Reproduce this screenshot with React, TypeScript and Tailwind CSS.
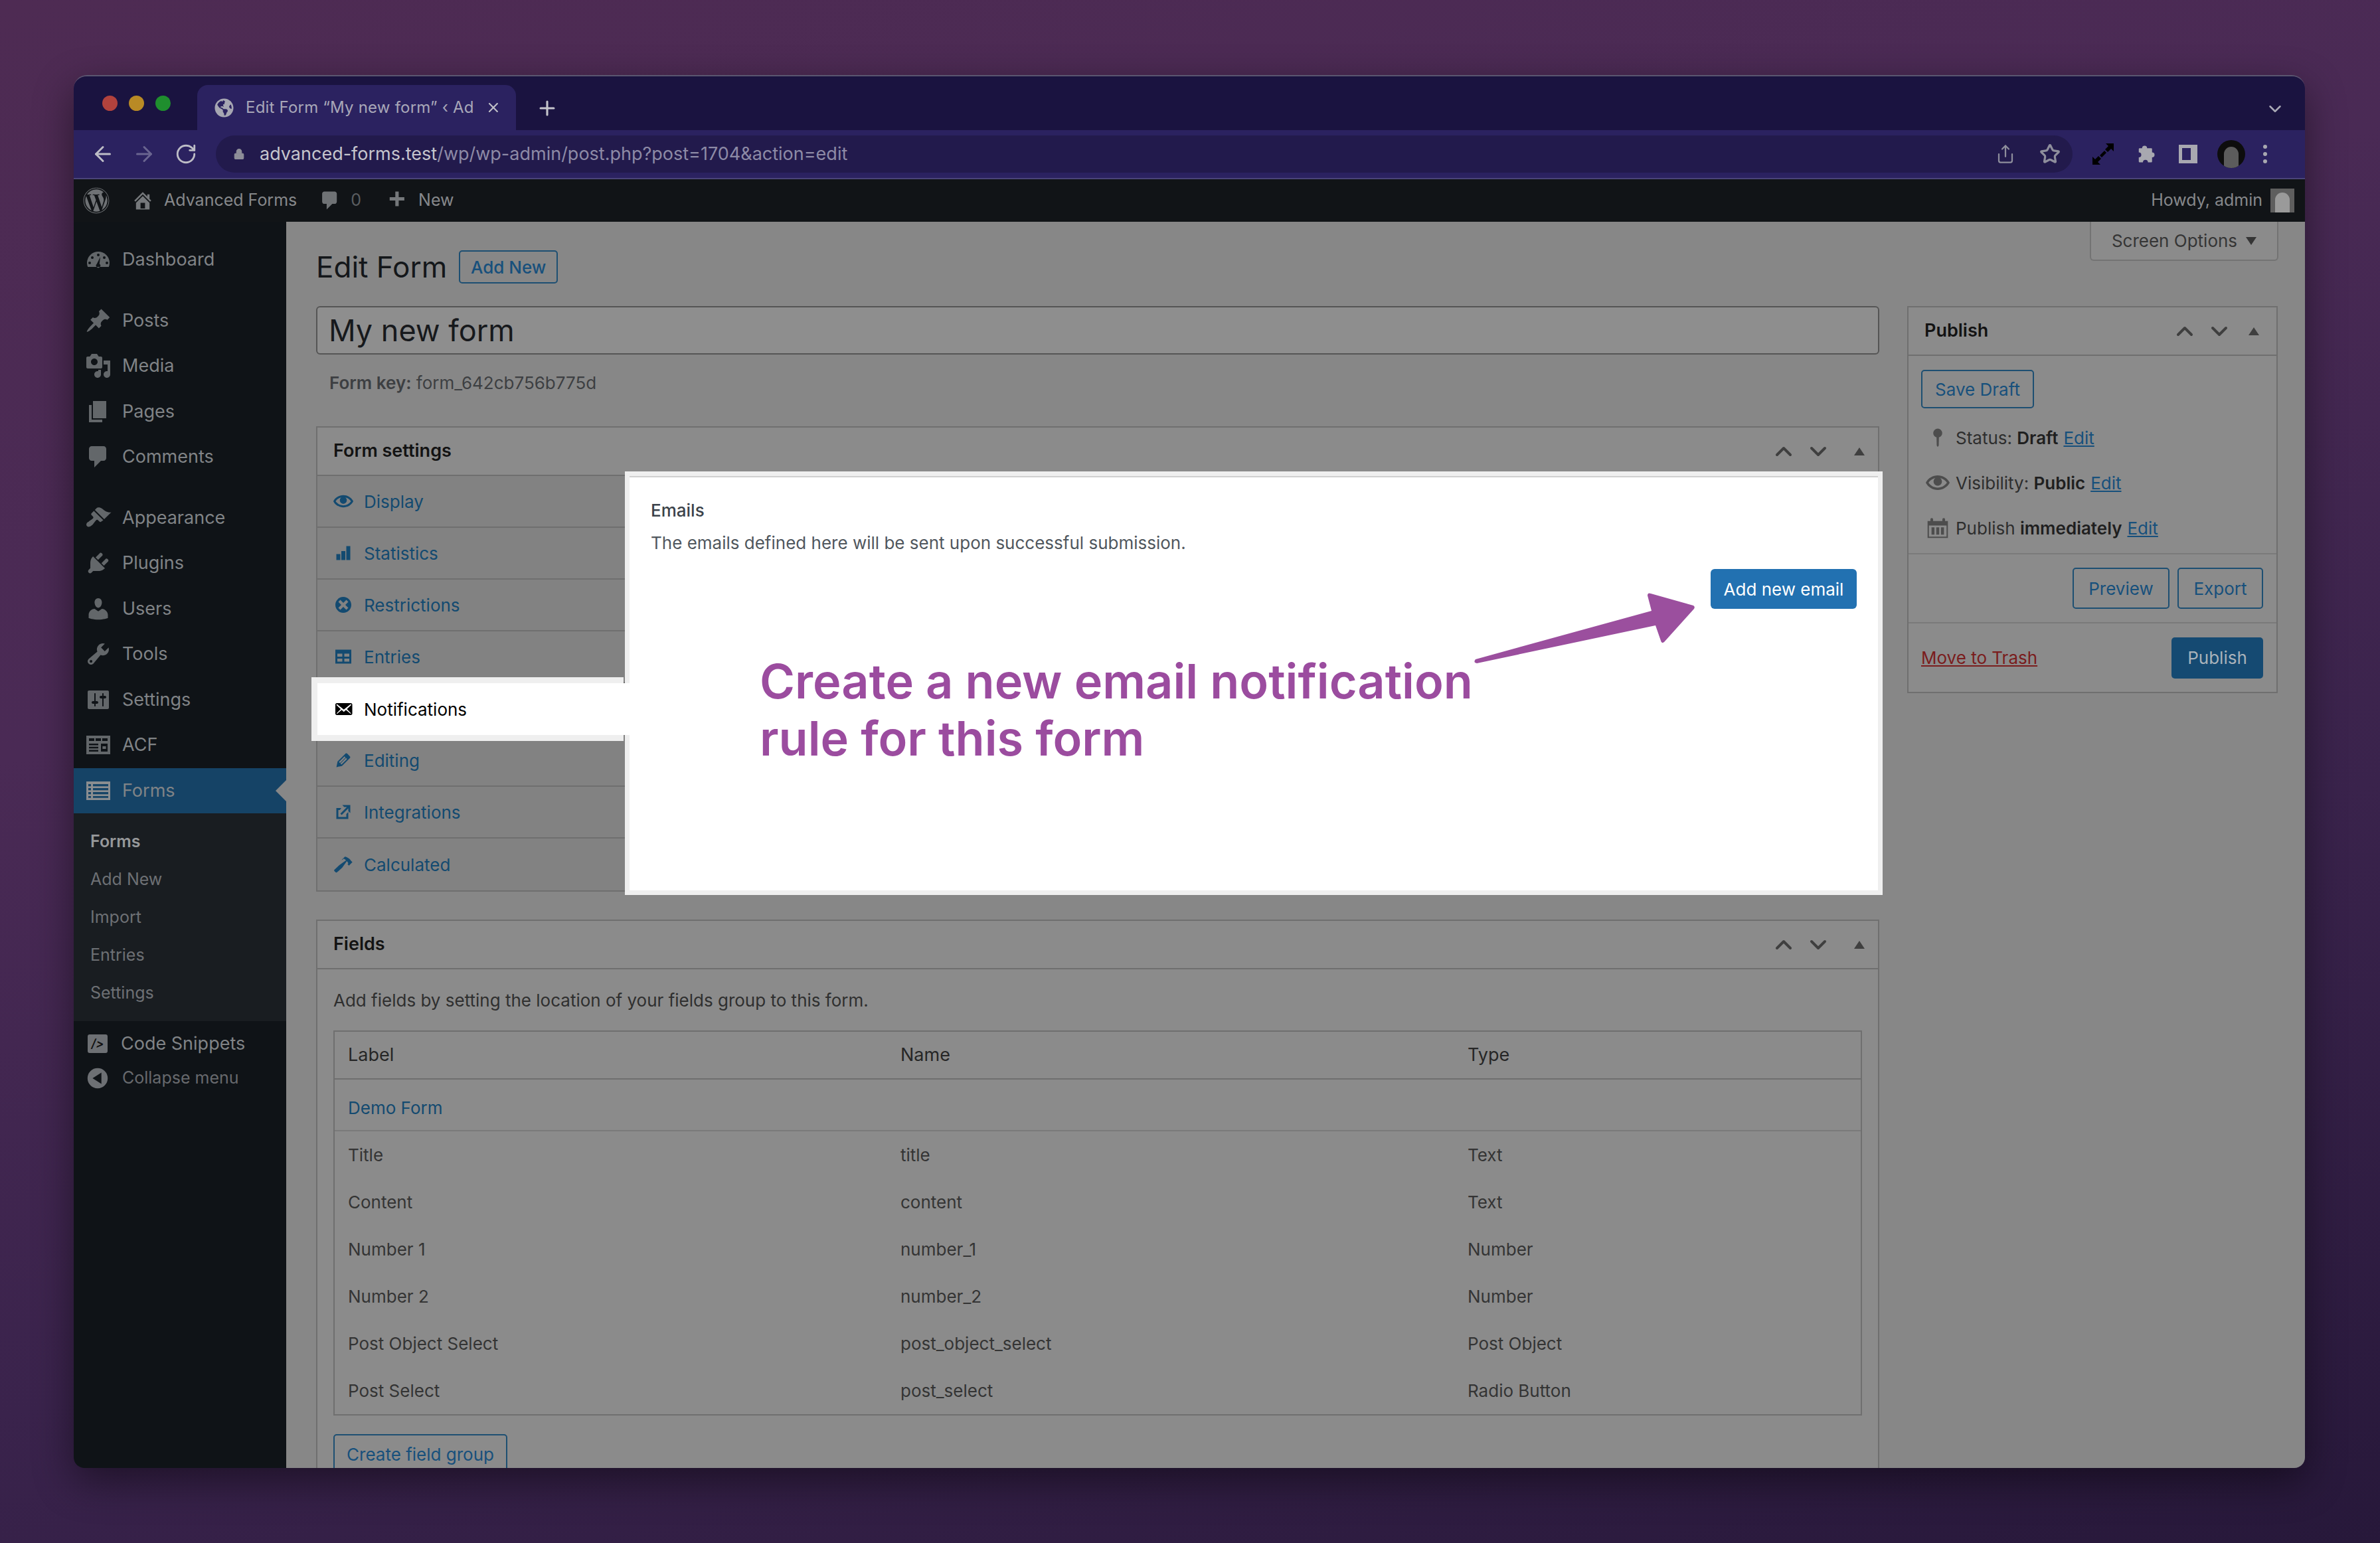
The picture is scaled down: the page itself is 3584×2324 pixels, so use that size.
import { ChevronDown, ChevronUp, ArrowLeft, ArrowRight, RotateCw, Lock, Plus, X, Star, Share } from "lucide-react";
import { FaWordpress, FaGlobeAmericas } from "react-icons/fa";
import type { ReactNode } from "react";

const P = {
    dashboard: "M10 4a8.5 8.5 0 0 0-8.5 8.5c0 1.1.2 2.1.6 3h15.8c.4-.9.6-1.9.6-3A8.5 8.5 0 0 0 10 4zM10 5.5a1 1 0 1 1 0 2 1 1 0 0 1 0-2zM5.5 7.5a1 1 0 1 1 0 2 1 1 0 0 1 0-2zM14.5 7.5a1 1 0 1 1 0 2 1 1 0 0 1 0-2zM3.5 11.5a1 1 0 1 1 0 2 1 1 0 0 1 0-2zM16.5 11.5a1 1 0 1 1 0 2 1 1 0 0 1 0-2zM11.5 8l-.6 5.2a1.6 1.6 0 1 1-2 .1z",
    posts: "M10.44 3.02l1.82-1.82 6.36 6.35-1.83 1.82c-1.05-.68-2.48-.57-3.41.36l-.75.75c-.92.93-1.04 2.35-.35 3.41l-1.83 1.82-2.41-2.41-2.8 2.79c-.42.42-3.38 2.71-3.8 2.29s1.86-3.39 2.28-3.81l2.79-2.79L4.1 9.36l1.83-1.82c1.05.69 2.48.57 3.4-.36l.75-.75c.93-.92 1.05-2.35.36-3.41z",
    media: "M13 11V4c0-.55-.45-1-1-1h-1.67L9 1H5L3.67 3H2c-.55 0-1 .45-1 1v7c0 .55.45 1 1 1h10c.55 0 1-.45 1-1zM7 4.5c1.38 0 2.5 1.12 2.5 2.5S8.38 9.5 7 9.5 4.5 8.38 4.5 7 5.62 4.5 7 4.5zM14 6h5v10.5c0 1.38-1.12 2.5-2.5 2.5S14 17.88 14 16.5s1.12-2.5 2.5-2.5c.17 0 .34.02.5.05V9h-3V6zm-4 8.05V13h2v3.5c0 1.38-1.12 2.5-2.5 2.5S7 17.88 7 16.5 8.12 14 9.5 14c.17 0 .34.02.5.05z",
    pages: "M6 15V2h10v13H6zm-1 1h8v2H3V5h2v11z",
    comments: "M5 2h9c1.1 0 2 .9 2 2v7c0 1.1-.9 2-2 2h-2l-5 5v-5H5c-1.1 0-2-.9-2-2V4c0-1.1.9-2 2-2z",
    appearance: "M14.48 11.06L7.41 3.99l1.5-1.5c.5-.56 2.3-.47 3.51.32 1.21.8 1.43 1.28 2.91 2.1 1.18.64 2.45 1.26 4.45.85zm-.71.71L6.7 4.7 4.93 6.47c-.39.39-.39 1.02 0 1.41l1.06 1.06c.39.39.39 1.03 0 1.42-.6.6-1.43 1.11-2.21 1.69-.35.26-.7.53-1.01.84C1.43 13.23.4 15.13 1.5 16.23c1.1 1.1 3.01.07 4.36-1.28.31-.31.58-.66.85-1.02.57-.78 1.08-1.61 1.69-2.21.39-.39 1.02-.39 1.41 0l1.06 1.06c.39.39 1.02.39 1.41 0z",
    plugins: "M13.11 4.36L9.87 7.6 8 5.73l3.24-3.24c.35-.34 1.05-.2 1.56.32.52.51.66 1.21.31 1.55zm-8 1.77l.91-1.12 9.01 9.01-1.19.84c-.71.71-2.63 1.16-3.82 1.16H6.14L4.9 17.26c-.59.59-1.54.59-2.12 0-.59-.58-.59-1.53 0-2.12l1.24-1.24v-3.88c0-1.13.4-3.19 1.09-3.89zm7.26 3.97l3.24-3.24c.34-.35 1.04-.21 1.55.31.52.51.66 1.21.31 1.55l-3.24 3.25z",
    users: "M10 9.25c-2.27 0-2.73-3.44-2.73-3.44C7 4.02 7.82 2 9.97 2c2.16 0 2.98 2.02 2.71 3.81 0 0-.41 3.44-2.68 3.44zm0 2.57L12.72 10c2.39 0 4.52 2.33 4.52 4.53v2.49s-3.65 1.13-7.24 1.13c-3.65 0-7.24-1.13-7.24-1.13v-2.49c0-2.25 1.94-4.48 4.47-4.48z",
    tools: "M16.68 9.77c-1.34 1.34-3.3 1.67-4.95.99l-5.41 6.52c-.99.99-2.59.99-3.58 0s-.99-2.59 0-3.57l6.52-5.42c-.68-1.65-.35-3.61.99-4.95 1.28-1.28 3.12-1.62 4.72-1.06l-2.89 2.89 2.82 2.82 2.86-2.87c.53 1.58.18 3.39-1.08 4.65zM3.81 16.21c.4.39 1.04.39 1.43 0 .4-.4.4-1.04 0-1.43-.39-.4-1.03-.4-1.43 0-.39.39-.39 1.03 0 1.43z",
    settings: "M18 16V4c0-.55-.45-1-1-1H3c-.55 0-1 .45-1 1v12c0 .55.45 1 1 1h14c.55 0 1-.45 1-1zM8 11h1c.55 0 1 .45 1 1s-.45 1-1 1H8v1.5c0 .28-.22.5-.5.5s-.5-.22-.5-.5V13H6c-.55 0-1-.45-1-1s.45-1 1-1h1V5.5c0-.28.22-.5.5-.5s.5.22.5.5V11zm5-2h-1c-.55 0-1-.45-1-1s.45-1 1-1h1V5.5c0-.28.22-.5.5-.5s.5.22.5.5V7h1c.55 0 1 .45 1 1s-.45 1-1 1h-1v5.5c0 .28-.22.5-.5.5s-.5-.22-.5-.5V9z",
    acf: "M1 3h18v14H1zM3 5v2h4V5zM8 5v2h4V5zM13 5v2h4V5zM3 9v1.2h7V9zM3 11.4v1.2h7v-1.2zM3 13.8V15h7v-1.2zM12 9v6h5V9zM13.2 11h2.6v2h-2.6z",
    forms: "M1 3h18v14H1zM2.5 5v1.6h2V5zM6 5v1.6h11.5V5zM2.5 8v1.6h2V8zM6 8v1.6h11.5V8zM2.5 11v1.6h2V11zM6 11v1.6h11.5V11zM2.5 14v1.4h2V14zM6 14v1.4h11.5V14z",
    collapse: "M10 2a8 8 0 1 0 0 16 8 8 0 0 0 0-16zM13 5.5v9L6 10z",
    home: "M16 8.5l1.53 1.53-1.06 1.06L10 4.62l-6.47 6.47-1.06-1.06L10 2.5l4 4v-2h2v4zm-6-2.46l6 5.99V18H4v-5.97zM12 17v-5H8v5h4z",
    plus: "M17 7v3h-5v5H9v-5H4V7h5V2h3v5h5z",
    eye: "M19.7 9.4C17.7 6 14 3.9 10 3.9S2.3 6 .3 9.4L0 10l.3.6c2 3.4 5.7 5.5 9.7 5.5s7.7-2.1 9.7-5.5l.3-.6-.3-.6zM10 14.1c-3.1 0-6-1.6-7.7-4.1C3.6 8 5.7 6.6 8 6.1c-.9.6-1.5 1.7-1.5 2.9 0 1.9 1.6 3.5 3.5 3.5s3.5-1.6 3.5-3.5c0-1.2-.6-2.3-1.5-2.9 2.3.5 4.4 1.9 5.7 3.9-1.7 2.5-4.6 4.1-7.7 4.1z",
    bars: "M3 11h4v6H3zM8 8h4v9H8zM13 3h4v14h-4z",
    dismiss: "M10 2c4.42 0 8 3.58 8 8s-3.58 8-8 8-8-3.58-8-8 3.58-8 8-8zm5 11l-3-3 3-3-2-2-3 3-3-3-2 2 3 3-3 3 2 2 3-3 3 3z",
    table: "M2 3h16v14H2zM4 7v3h5V7zM11 7v3h5V7zM4 12v3h5v-3zM11 12v3h5v-3z",
    email: "M19 14.5v-9c0-.83-.67-1.5-1.5-1.5H3.49c-.83 0-1.5.67-1.5 1.5v9c0 .83.67 1.5 1.5 1.5H17.5c.83 0 1.5-.67 1.5-1.5zm-1.31-9.11c.33.33.15.67-.03.84L13.6 9.95l3.9 4.06c.12.14.2.36.06.51-.13.16-.43.15-.56.05l-4.37-3.73-2.14 1.95-2.13-1.95-4.37 3.73c-.13.1-.43.11-.56-.05-.14-.15-.06-.37.06-.51l3.9-4.06-4.06-3.72c-.18-.17-.36-.51-.03-.84s.67-.17.95.07l6.24 5.04 6.25-5.04c.28-.24.62-.4.95-.07z",
    edit: "M13.89 3.39l2.71 2.72c.46.46.42 1.24.03 1.64l-8.01 8.02-5.56 1.16 1.16-5.58s7.6-7.63 7.99-8.03c.39-.39 1.22-.39 1.68.07zm-2.73 2.79l-5.59 5.61 1.11 1.11 5.54-5.65zm-2.97 8.23l5.58-5.6-1.07-1.08-5.59 5.6z",
    external: "M9 3h8v8l-2-1.9V6.4l-6.6 6.6L7 11.6 13.6 5H10.9zM3 6h5l-1.5 2H5v7h8v-3l2-2v7H3z",
    hammer: "M17.7 6.32l1.41 1.42-3.47 3.41-1.42-1.42.84-.82c-.32-.76-.81-1.57-1.51-2.31l-4.61 6.59-5.26 4.7c-.39.39-1.02.39-1.42 0l-1.2-1.21c-.39-.39-.39-1.02 0-1.41l5.16-4.82 6.54-4.7c-.79-.72-1.6-1.2-2.36-1.52l-.83.83L8.17 5.7l3.41-3.47c2.32.3 4.95 2.22 6.12 4.09z",
    pin: "M10 1a4.5 4.5 0 0 0-1.2 8.84L9 18l1 1.5 1-1.5.2-8.16A4.5 4.5 0 0 0 10 1z",
    calendar: "M1 4h2.5V2.5a1.2 1.2 0 0 1 2.4 0V4h8.2V2.5a1.2 1.2 0 0 1 2.4 0V4H19v15H1zM2.2 8v9.8h15.6V8zM4.5 9.5h2.6V16H4.5zM8.7 9.5h2.6V16H8.7zM12.9 9.5h2.6V16h-2.6z",
};

function Dash({ d, className }: { d: string; className: string }) {
    return (
        <svg viewBox="0 0 20 20" fill="currentColor" fillRule="evenodd" className={className}>
            <path d={d} />
        </svg>
    );
}

const menuTop = [
    { label: "Dashboard", icon: P.dashboard, gap: false },
    { label: "Posts", icon: P.posts, gap: true },
    { label: "Media", icon: P.media, gap: false },
    { label: "Pages", icon: P.pages, gap: false },
    { label: "Comments", icon: P.comments, gap: false },
    { label: "Appearance", icon: P.appearance, gap: true },
    { label: "Plugins", icon: P.plugins, gap: false },
    { label: "Users", icon: P.users, gap: false },
    { label: "Tools", icon: P.tools, gap: false },
    { label: "Settings", icon: P.settings, gap: false },
    { label: "ACF", icon: P.acf, gap: false },
];

const tabs = [
    { label: "Display", icon: P.eye },
    { label: "Statistics", icon: P.bars },
    { label: "Restrictions", icon: P.dismiss },
    { label: "Entries", icon: P.table },
    { label: "Notifications", icon: P.email, active: true },
    { label: "Editing", icon: P.edit },
    { label: "Integrations", icon: P.external },
    { label: "Calculated", icon: P.hammer },
];

const fieldRows = [
    ["Title", "title", "Text"],
    ["Content", "content", "Text"],
    ["Number 1", "number_1", "Number"],
    ["Number 2", "number_2", "Number"],
    ["Post Object Select", "post_object_select", "Post Object"],
    ["Post Select", "post_select", "Radio Button"],
];

function BoxControls() {
    return (
        <div className="flex items-center text-[#3f3f3f]">
            <ChevronUp className="w-[40px] h-[40px]" strokeWidth={2.4} />
            <ChevronDown className="w-[40px] h-[40px] ml-[12px]" strokeWidth={2.4} />
            <svg viewBox="0 0 16 12" fill="currentColor" className="w-[16px] h-[12px] ml-[34px] mr-[20px]">
                <polygon points="8,0 16,12 0,12" />
            </svg>
        </div>
    );
}

function OutlineBtn({ className, children }: { className: string; children: ReactNode }) {
    return (
        <div className={`flex items-center justify-center rounded-[5px] border-[2px] border-[#1d4f72] text-[26px] text-[#17507c] ${className}`}>
            {children}
        </div>
    );
}

function PublishRow({ icon, iconClass, label, value }: { icon: string; iconClass: string; label: string; value: string }) {
    return (
        <div className="flex items-center h-[68px] text-[26px] text-[#2e2e2e]">
            <div className="w-[52px] flex justify-center text-[#4d4d4d] -ml-[1px] mr-[1px]">
                <Dash d={icon} className={iconClass} />
            </div>
            <span>{label}&nbsp;</span>
            <span className="font-semibold text-[#1f1f1f]">{value}</span>
            <span className="underline text-[#17507c] ml-[8px]">Edit</span>
        </div>
    );
}

export default function App() {
    return (
        <div
            className="w-[3584px] h-[2324px] pt-[113px] pl-[111px] overflow-hidden bg-[linear-gradient(165deg,#4e2b53_0%,#4a2a55_35%,#3a234c_65%,#27183a_100%)]"
            style={{ fontFamily: "Inter, 'Noto Sans', sans-serif" }}
        >
            <div className="w-[3360px] h-[2098px] rounded-t-[20px] rounded-b-[16px] overflow-hidden flex flex-col border-t-[2px] border-[#5a5670] shadow-[0_20px_60px_rgba(0,0,0,0.45)]">
                {/* browser tab strip */}
                <div className="h-[81px] shrink-0 bg-[#1a1340] flex items-end relative">
                    <div className="flex gap-[17px] items-center pl-[43px] w-[186px] self-start pt-[29px]">
                        <div className="w-[23px] h-[23px] rounded-full bg-[#b2423d]" />
                        <div className="w-[23px] h-[23px] rounded-full bg-[#b98a25]" />
                        <div className="w-[23px] h-[23px] rounded-full bg-[#1f8e2e]" />
                    </div>
                    <div className="w-[480px] h-[68px] bg-[#2b2260] rounded-t-[16px] flex items-center pl-[26px] pr-[22px]">
                        <FaGlobeAmericas className="w-[29px] h-[29px] text-[#a6a6b2] shrink-0" />
                        <span className="ml-[18px] text-[24px] text-[#a8a7b8] w-[346px] overflow-hidden whitespace-nowrap tracking-[0.2px]">
                            Edit Form “My new form” ‹ Advanced
                        </span>
                        <X className="ml-[18px] w-[24px] h-[24px] text-[#c0c0c8]" strokeWidth={2.2} />
                    </div>
                    <Plus className="ml-[30px] mb-[16px] w-[34px] h-[34px] text-[#c5c5cc]" strokeWidth={2.2} />
                    <ChevronDown className="absolute right-[30px] top-[34px] w-[30px] h-[30px] text-[#a9a9b6]" strokeWidth={2} />
                </div>
                {/* browser toolbar */}
                <div className="h-[74px] shrink-0 bg-[#2b2260] border-b-[2px] border-[#4a4478] flex items-center">
                    <ArrowLeft className="ml-[26px] w-[36px] h-[36px] text-[#bdbdc6]" strokeWidth={2} />
                    <ArrowRight className="ml-[26px] w-[36px] h-[36px] text-[#6a6590]" strokeWidth={2} />
                    <RotateCw className="ml-[28px] w-[34px] h-[34px] text-[#bdbdc6]" strokeWidth={2} />
                    <div className="ml-[28px] w-[2796px] h-[56px] rounded-full bg-[#221a4c] flex items-center pl-[26px]">
                        <Lock className="w-[18px] h-[20px] text-[#8e8e98]" fill="currentColor" strokeWidth={1.5} />
                        <span className="ml-[22px] text-[27px] text-[#c5c5cd]">advanced-forms.test</span>
                        <span className="text-[27px] text-[#8d8aa6]">/wp/wp-admin/post.php?post=1704&amp;action=edit</span>
                        <Share className="ml-auto w-[30px] h-[32px] text-[#8e8e9c]" strokeWidth={1.8} />
                        <Star className="ml-[36px] mr-[18px] w-[32px] h-[32px] text-[#8e8e9c]" strokeWidth={2.4} />
                    </div>
                    <svg viewBox="0 0 32 32" fill="#000" className="ml-[30px] w-[32px] h-[32px]">
                        <path d="M20 0h12v12l-4-4-5 5-4-4 5-5zM12 32H0V20l4 4 5-5 4 4-5 5zM11 18l7-7 3 3-7 7z" />
                    </svg>
                    <svg viewBox="0 0 24 24" fill="#a8a8b0" className="ml-[34px] w-[30px] h-[30px]">
                        <path d="M10 2a3 3 0 0 1 3 3h5a1 1 0 0 1 1 1v4a3 3 0 1 1 0 6v5a1 1 0 0 1-1 1h-4a3 3 0 1 0-6 0H4a1 1 0 0 1-1-1v-5a3 3 0 1 0 0-6V6a1 1 0 0 1 1-1h3a3 3 0 0 1 3-3z" />
                    </svg>
                    <div className="ml-[34px] w-[28px] h-[28px] border-[5px] border-[#a8a8b0] border-r-[10px] shrink-0" />
                    <div className="ml-[30px] w-[42px] h-[42px] rounded-full bg-[#0d0d0d] flex items-end justify-center overflow-hidden shrink-0">
                        <div className="w-[22px] h-[32px] rounded-t-full bg-[#5c5c5c]" />
                    </div>
                    <div className="ml-[27px] flex flex-col gap-[5px]">
                        <div className="w-[6px] h-[6px] rounded-full bg-[#a8a8b0]" />
                        <div className="w-[6px] h-[6px] rounded-full bg-[#a8a8b0]" />
                        <div className="w-[6px] h-[6px] rounded-full bg-[#a8a8b0]" />
                    </div>
                </div>
                {/* wp admin bar */}
                <div className="h-[64px] shrink-0 bg-[#111417] flex items-center text-[25px] text-[#86888b]">
                    <FaWordpress className="ml-[14px] w-[40px] h-[40px] text-[#6f7275]" />
                    <Dash d={P.home} className="ml-[33px] w-[34px] h-[34px] text-[#75787b]" />
                    <span className="ml-[15px]">Advanced Forms</span>
                    <Dash d={P.comments} className="ml-[33px] w-[34px] h-[34px] text-[#6f7275]" />
                    <span className="ml-[14px] text-[#5a5d60]">0</span>
                    <Dash d={P.plus} className="ml-[36px] w-[34px] h-[34px] text-[#75787b]" />
                    <span className="ml-[16px]">New</span>
                    <span className="ml-auto">Howdy, admin</span>
                    <div className="ml-[12px] mr-[16px] w-[36px] h-[36px] bg-[#5e5e5e] flex items-end justify-center overflow-hidden">
                        <div className="w-[22px] h-[30px] rounded-t-full bg-[#9a9a9a]" />
                    </div>
                </div>

                <div className="flex-1 flex min-h-0">
                    {/* wp sidebar */}
                    <aside className="w-[320px] shrink-0 bg-[#0f1317] pt-[23px] text-[#808386] text-[27px]">
                        {menuTop.map((item) => (
                            <div key={item.label} className={item.gap ? "mt-[23px]" : ""}>
                                <div className="h-[68.5px] flex items-center">
                                    <Dash d={item.icon} className="ml-[17px] w-[40px] h-[40px] text-[#63676a]" />
                                    <span className="ml-[16px]">{item.label}</span>
                                </div>
                            </div>
                        ))}
                        <div className="h-[68.5px] flex items-center bg-[#154366] relative">
                            <Dash d={P.forms} className="ml-[17px] w-[40px] h-[40px] text-[#8a8d90]" />
                            <span className="ml-[16px]">Forms</span>
                            <div className="absolute right-0 top-[18px] border-y-[16px] border-y-transparent border-r-[16px] border-r-[#878787]" />
                        </div>
                        <div className="bg-[#191d21] py-[14px] text-[25px] text-[#6d7074]">
                            <div className="h-[57px] flex items-center pl-[25px] font-semibold text-[#96989a]">Forms</div>
                            <div className="h-[57px] flex items-center pl-[25px]">Add New</div>
                            <div className="h-[57px] flex items-center pl-[25px]">Import</div>
                            <div className="h-[57px] flex items-center pl-[25px]">Entries</div>
                            <div className="h-[57px] flex items-center pl-[25px]">Settings</div>
                        </div>
                        <div className="h-[68.5px] flex items-center">
                            <div className="ml-[21px] w-[30px] h-[28px] rounded-[3px] bg-[#6d7074] text-[#111] text-[18px] leading-none flex items-center justify-center italic font-semibold shrink-0">
                                /&gt;
                            </div>
                            <span className="ml-[20px]">Code Snippets</span>
                        </div>
                        <div className="flex items-center text-[25px] text-[#67696d] -mt-[2px]">
                            <Dash d={P.collapse} className="ml-[17px] w-[38px] h-[38px] text-[#6d7074]" />
                            <span className="ml-[18px]">Collapse menu</span>
                        </div>
                    </aside>

                    {/* wp content */}
                    <main className="flex-1 relative overflow-hidden bg-[#878787] pl-[45px] pt-[43px]">
                        <div className="absolute top-0 right-[40px] w-[284px] h-[59px] rounded-b-[6px] border-x-[2px] border-b-[2px] border-[#737373] bg-[#8b8b8b] flex items-center justify-center text-[26px] text-[#353535]">
                            Screen Options
                            <svg viewBox="0 0 16 12" fill="currentColor" className="ml-[13px] w-[16px] h-[12px]">
                                <polygon points="0,0 16,0 8,12" />
                            </svg>
                        </div>

                        <div className="flex items-center h-[50px]">
                            <h1 className="text-[44px] text-[#14171a] leading-none">Edit Form</h1>
                            <OutlineBtn className="ml-[18px] w-[149px] h-[50px] font-medium">Add New</OutlineBtn>
                        </div>

                        <div className="flex mt-[34px] items-start">
                            <div className="w-[2354px] shrink-0">
                                <div className="h-[73px] rounded-[6px] border-[2px] border-[#555] bg-[#8e8e8e] flex items-center pl-[17px] text-[45px] text-[#17191c]">
                                    My new form
                                </div>
                                <div className="mt-[24px] h-[36px] flex items-center pl-[20px] text-[26px] text-[#3d3f42]">
                                    <span className="font-semibold">Form key:</span>
                                    <span>&nbsp;form_642cb756b775d</span>
                                </div>

                                {/* form settings */}
                                <section className="mt-[48px] border-[2px] border-[#6f6f6f] bg-[#8b8b8b]">
                                    <div className="h-[73px] flex items-center justify-between pl-[24px] border-b-[2px] border-[#6f6f6f]">
                                        <h2 className="text-[27px] font-semibold text-[#131313]">Form settings</h2>
                                        <BoxControls />
                                    </div>
                                    <div className="flex">
                                        <div className="w-[470px] shrink-0 bg-[#828282]">
                                            {tabs.map((tab) =>
                                                tab.active ? (
                                                    <div
                                                        key={tab.label}
                                                        className="relative z-20 h-[78px] bg-white flex items-center pl-[24px] text-[26px] text-black shadow-[-9px_0_0_0_#efefef,-9px_-9px_0_0_#efefef,-9px_9px_0_0_#efefef]"
                                                    >
                                                        <Dash d={tab.icon} className="w-[30px] h-[30px]" />
                                                        <span className="ml-[16px]">{tab.label}</span>
                                                    </div>
                                                ) : (
                                                    <div
                                                        key={tab.label}
                                                        className="h-[78px] flex items-center pl-[24px] text-[26px] text-[#134a70] border-b-[2px] border-[#6f6f6f] last:border-b-0"
                                                    >
                                                        <Dash d={tab.icon} className="w-[30px] h-[30px]" />
                                                        <span className="ml-[16px]">{tab.label}</span>
                                                    </div>
                                                )
                                            )}
                                        </div>
                                        <div className="relative z-10 flex-1 bg-white shadow-[0_0_0_7px_#efefef] border-t-[2px] border-[#cfcfcf] pl-[32px] pt-[34px]">
                                            <div className="text-[26px] font-medium text-[#3c434a] leading-[32px]">Emails</div>
                                            <div className="mt-[17px] text-[26px] text-[#50575e] leading-[32px]">
                                                The emails defined here will be sent upon successful submission.
                                            </div>
                                            <div className="absolute top-[138px] right-[32px] w-[220px] h-[60px] rounded-[6px] bg-[#2271b1] text-white text-[26px] flex items-center justify-center">
                                                Add new email
                                            </div>
                                            <div className="absolute left-[196px] top-[264px] text-[72px] leading-[86px] font-semibold text-[#9b4c9f] whitespace-nowrap">
                                                Create a new email notification
                                                <br />
                                                rule for this form
                                            </div>
                                            <svg viewBox="0 0 340 110" className="absolute left-[1270px] top-[170px] w-[340px] h-[110px]" fill="#9b4f9e">
                                                <path d="M4 104 L269 31 L263 8 Q263 3 268 5 L332 23 Q335 25 333 28 L288 78 Q284 81 283 76 L275 53 L6 110 Q0 109 4 104Z" />
                                            </svg>
                                        </div>
                                    </div>
                                </section>

                                {/* fields */}
                                <section className="mt-[42px] border-[2px] border-[#6f6f6f] bg-[#8b8b8b] pb-[60px]">
                                    <div className="h-[73px] flex items-center justify-between pl-[24px] border-b-[2px] border-[#6f6f6f]">
                                        <h2 className="text-[27px] font-semibold text-[#131313]">Fields</h2>
                                        <BoxControls />
                                    </div>
                                    <div className="px-[24px]">
                                        <p className="h-[92px] flex items-center text-[26px] text-[#2f2f2f]">
                                            Add fields by setting the location of your fields group to this form.
                                        </p>
                                        <div className="border-[2px] border-[#6f6f6f]">
                                            <div className="h-[72px] grid grid-cols-[832px_854px_1fr] items-center pl-[20px] text-[27px] text-[#262626] border-b-[2px] border-[#6f6f6f]">
                                                <span>Label</span>
                                                <span>Name</span>
                                                <span>Type</span>
                                            </div>
                                            <div className="h-[78px] flex items-end pb-[14px] pl-[20px] text-[26px] text-[#134a70] border-b-[2px] border-[#7a7a7a]">
                                                Demo Form
                                            </div>
                                            {fieldRows.map((row) => (
                                                <div
                                                    key={row[0]}
                                                    className="h-[71px] grid grid-cols-[832px_854px_1fr] items-center pl-[20px] text-[26px] text-[#343434]"
                                                >
                                                    <span>{row[0]}</span>
                                                    <span>{row[1]}</span>
                                                    <span>{row[2]}</span>
                                                </div>
                                            ))}
                                        </div>
                                        <OutlineBtn className="mt-[28px] w-[262px] h-[60px]">Create field group</OutlineBtn>
                                    </div>
                                </section>
                            </div>

                            {/* publish */}
                            <section className="ml-[42px] w-[558px] shrink-0 border-[2px] border-[#6f6f6f] bg-[#8b8b8b]">
                                <div className="h-[73px] flex items-center justify-between pl-[24px] border-b-[2px] border-[#6f6f6f]">
                                    <h2 className="text-[27px] font-semibold text-[#131313]">Publish</h2>
                                    <div className="flex items-center text-[#3f3f3f]">
                                        <ChevronUp className="w-[40px] h-[40px]" strokeWidth={2.4} />
                                        <ChevronDown className="w-[40px] h-[40px] ml-[12px]" strokeWidth={2.4} />
                                        <svg viewBox="0 0 16 12" fill="currentColor" className="w-[16px] h-[12px] ml-[24px] mr-[26px]">
                                            <polygon points="8,0 16,12 0,12" />
                                        </svg>
                                    </div>
                                </div>
                                <div className="px-[19px] pt-[21px] pb-[4px]">
                                    <OutlineBtn className="w-[170px] h-[58px]">Save Draft</OutlineBtn>
                                    <div className="mt-[10px]">
                                        <PublishRow icon={P.pin} iconClass="w-[30px] h-[30px]" label="Status:" value="Draft" />
                                        <PublishRow icon={P.eye} iconClass="w-[36px] h-[36px]" label="Visibility:" value="Public" />
                                        <PublishRow icon={P.calendar} iconClass="w-[34px] h-[34px]" label="Publish" value="immediately" />
                                    </div>
                                </div>
                                <div className="h-[104px] border-t-[2px] border-[#7a7a7a] flex items-center justify-end gap-[12px] pr-[20px]">
                                    <OutlineBtn className="w-[146px] h-[62px]">Preview</OutlineBtn>
                                    <OutlineBtn className="w-[129px] h-[62px]">Export</OutlineBtn>
                                </div>
                                <div className="h-[105px] border-t-[2px] border-[#7a7a7a] flex items-center justify-between pl-[19px] pr-[20px]">
                                    <span className="text-[26px] underline text-[#7a1d1d]">Move to Trash</span>
                                    <div className="w-[138px] h-[62px] rounded-[5px] bg-[#154a72] text-[26px] text-[#a9b2ba] flex items-center justify-center">
                                        Publish
                                    </div>
                                </div>
                            </section>
                        </div>
                    </main>
                </div>
            </div>
        </div>
    );
}
